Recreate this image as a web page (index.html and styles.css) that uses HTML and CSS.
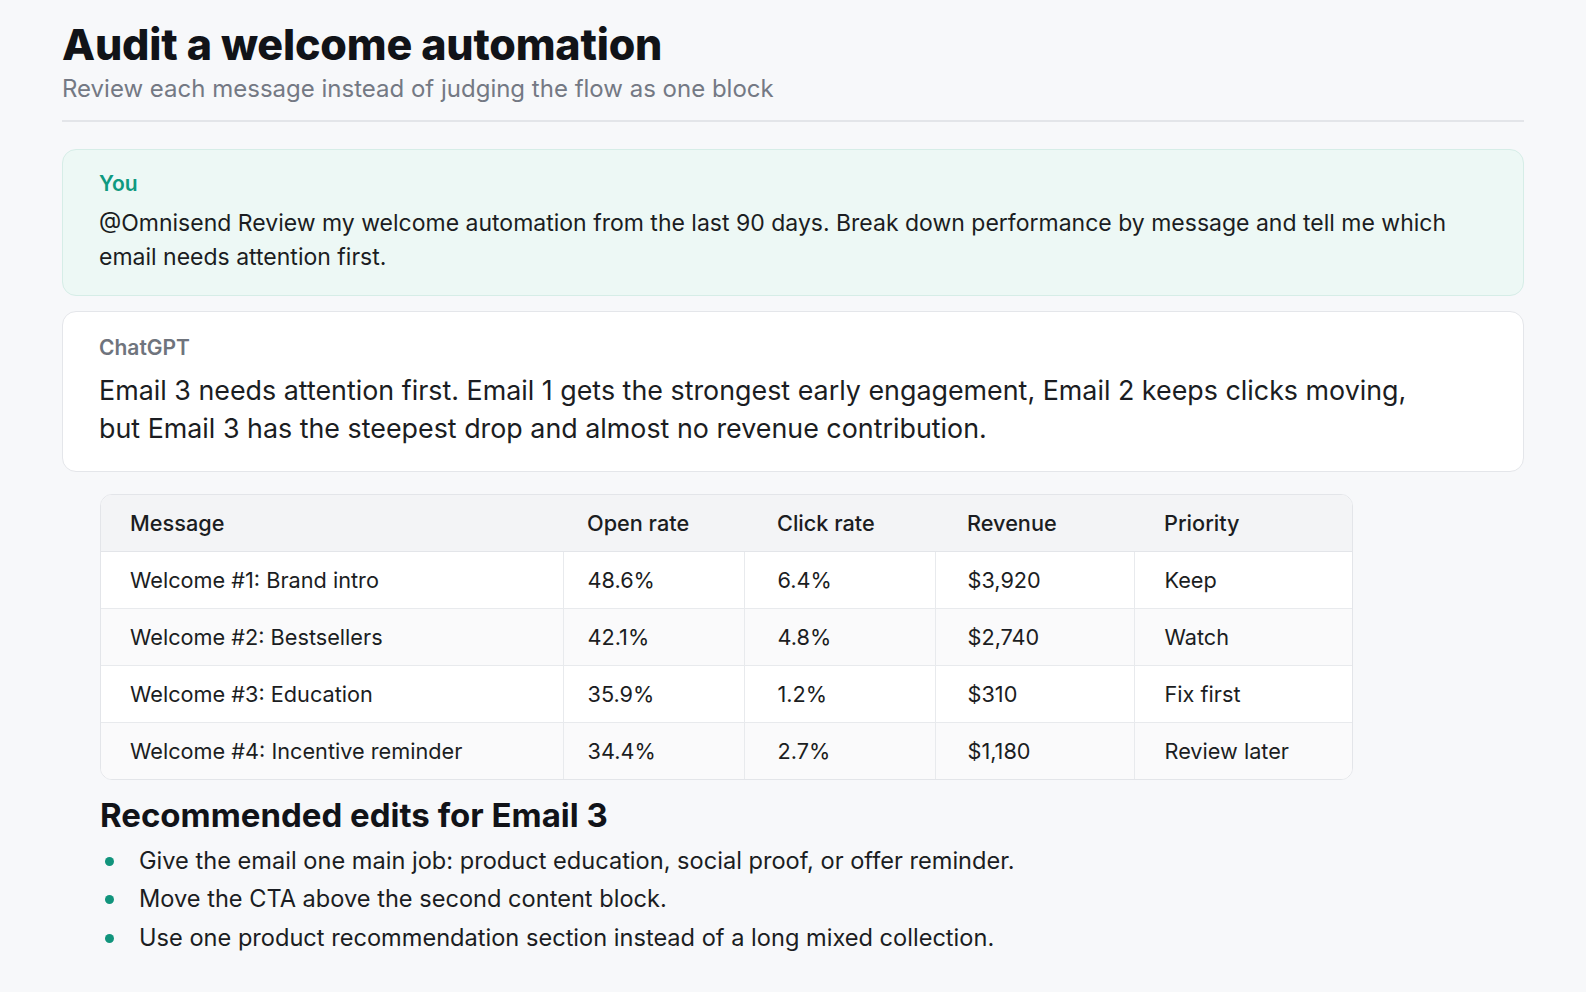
FILE: index.html
```html
<!DOCTYPE html>
<html lang="en">
<head>
<meta charset="utf-8">
<title>Audit a welcome automation</title>
<link rel="stylesheet" href="styles.css">
</head>
<body>
<main class="page">
  <header class="head">
    <h1 class="title">Audit a welcome automation</h1>
    <p class="subtitle">Review each message instead of judging the flow as one block</p>
  </header>

  <section class="card card-user">
    <div class="who who-user">You</div>
    <p class="user-text">@Omnisend Review my welcome automation from the last 90 days. Break down performance by message and tell me which email needs attention first.</p>
  </section>

  <section class="card card-bot">
    <div class="who who-bot">ChatGPT</div>
    <p class="bot-text">Email 3 needs attention first. Email 1 gets the strongest early engagement, Email 2 keeps clicks moving, but Email 3 has the steepest drop and almost no revenue contribution.</p>
  </section>

  <div class="answer">
    <div class="table-wrap">
      <table class="perf">
        <thead>
          <tr><th class="c1">Message</th><th class="c2">Open rate</th><th class="c3">Click rate</th><th class="c4">Revenue</th><th class="c5">Priority</th></tr>
        </thead>
        <tbody>
          <tr><td class="c1">Welcome #1: Brand intro</td><td class="c2">48.6%</td><td class="c3">6.4%</td><td class="c4">$3,920</td><td class="c5">Keep</td></tr>
          <tr><td class="c1">Welcome #2: Bestsellers</td><td class="c2">42.1%</td><td class="c3">4.8%</td><td class="c4">$2,740</td><td class="c5">Watch</td></tr>
          <tr><td class="c1">Welcome #3: Education</td><td class="c2">35.9%</td><td class="c3">1.2%</td><td class="c4">$310</td><td class="c5">Fix first</td></tr>
          <tr><td class="c1">Welcome #4: Incentive reminder</td><td class="c2">34.4%</td><td class="c3">2.7%</td><td class="c4">$1,180</td><td class="c5">Review later</td></tr>
        </tbody>
      </table>
    </div>

    <h2 class="rec-title">Recommended edits for Email 3</h2>
    <ul class="rec-list">
      <li>Give the email one main job: product education, social proof, or offer reminder.</li>
      <li>Move the CTA above the second content block.</li>
      <li>Use one product recommendation section instead of a long mixed collection.</li>
    </ul>
  </div>
</main>
</body>
</html>
```

FILE: styles.css
```css
* { box-sizing: border-box; }

html, body {
  margin: 0;
  padding: 0;
}

body {
  background: #f7f8fa;
  color: #16181d;
  font-family: Inter, "Noto Sans", "Liberation Sans", sans-serif;
}

.page {
  width: 1462px;
  margin: 0 auto;
  padding-top: 17px;
  display: flex;
  flex-direction: column;
}

.head {
  border-bottom: 2px solid #e3e5e9;
  padding-bottom: 16px;
}

.title {
  margin: 0;
  font-size: 43px;
  line-height: 54px;
  font-weight: 800;
  letter-spacing: -0.2px;
  color: #111318;
}

.subtitle {
  margin: 3px 0 0;
  font-size: 24px;
  line-height: 30px;
  color: #747984;
}

.card {
  border-radius: 14px;
  padding: 19px 36px 21px;
}

.card-user {
  margin-top: 27px;
  background: #edf8f5;
  border: 1px solid #d6ede7;
}

.card-bot {
  margin-top: 15px;
  background: #ffffff;
  border: 1px solid #e4e6ea;
  padding-bottom: 24px;
}

.who {
  font-size: 21px;
  line-height: 30px;
  font-weight: 600;
}

.who-user { color: #0f9a80; }
.who-bot { color: #6f747d; margin-top: 2px; }

.user-text {
  margin: 8px 0 0;
  font-size: 23px;
  line-height: 33.5px;
  color: #1b1d22;
}

.bot-text {
  margin: 9px 0 0;
  font-size: 26.85px;
  line-height: 37.5px;
  color: #1b1d22;
  max-width: 1335px;
}

.answer {
  padding-left: 38px;
  display: flex;
  flex-direction: column;
}

.table-wrap {
  margin-top: 22px;
  width: 1253px;
  border: 1px solid #e3e5e9;
  border-radius: 12px;
  overflow: hidden;
  background: #ffffff;
}

.perf {
  width: 100%;
  border-collapse: collapse;
  font-size: 21.7px;
  color: #1b1d22;
}

.perf th, .perf td {
  text-align: left;
  height: 56.8px;
  padding: 0 0 0 29px;
  vertical-align: middle;
}

.perf th {
  background: #f3f4f6;
  font-weight: 500;
  border-bottom: 1px solid #e3e5e9;
}

.perf td {
  font-weight: 400;
  border-top: 1px solid #e8eaed;
  border-left: 1px solid #e8eaed;
}

.perf tbody tr:first-child td { border-top: none; }
.perf td:first-child { border-left: none; }

.perf tbody tr:nth-child(even) td { background: #fafafb; }

.perf .c1 { width: 462px; padding-left: 29px; }
.perf .c2 { width: 181px; padding-left: 24px; }
.perf .c3 { width: 191px; padding-left: 33px; }
.perf .c4 { width: 199px; padding-left: 32px; }
.perf .c5 { padding-left: 30px; }

.rec-title {
  margin: 14px 0 0;
  font-size: 33px;
  line-height: 42px;
  font-weight: 700;
  color: #111318;
}

.rec-list {
  list-style: none;
  margin: 6px 0 0;
  padding: 0;
  display: flex;
  flex-direction: column;
}

.rec-list li {
  display: flex;
  align-items: center;
  gap: 25px;
  font-size: 23.6px;
  line-height: 38.5px;
  color: #1b1d22;
}

.rec-list li::before {
  content: "";
  flex: none;
  width: 9px;
  height: 9px;
  border-radius: 50%;
  background: #11947c;
  margin-left: 5px;
}
```
